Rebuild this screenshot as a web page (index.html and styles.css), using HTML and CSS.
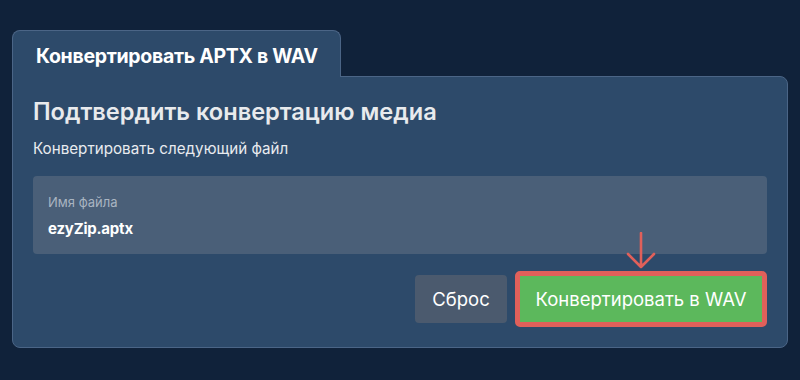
FILE: index.html
```html
<!DOCTYPE html>
<html lang="ru">
<head>
<meta charset="utf-8">
<link rel="stylesheet" href="styles.css">
</head>
<body>
<div class="wrap">
  <div class="tab">Конвертировать APTX в WAV</div>
  <div class="card">
    <h1 class="title">Подтвердить конвертацию медиа</h1>
    <p class="sub">Конвертировать следующий файл</p>
    <div class="field">
      <div class="label">Имя файла</div>
      <div class="value">ezyZip.aptx</div>
    </div>
    <div class="actions">
      <button class="btn reset">Сброс</button>
      <div class="convert-wrap">
        <svg class="arrow" width="32" height="38" viewBox="0 0 32 38"><path d="M16 1 V35 M3 22 L16 35 L29 22" fill="none" stroke="#e0605a" stroke-width="2.6" stroke-linecap="round" stroke-linejoin="round"/></svg>
        <button class="btn convert">Конвертировать в WAV</button>
      </div>
    </div>
  </div>
</div>
</body>
</html>
```
FILE: styles.css
```css
* { box-sizing: border-box; }
html, body { margin: 0; padding: 0; }
body {
  background: #10223a;
  font-family: Inter, "Noto Sans", sans-serif;
  width: 800px;
  height: 380px;
  overflow: hidden;
}
.wrap {
  padding: 30px 12px 0 12px;
  display: flex;
  flex-direction: column;
  align-items: flex-start;
}
.tab {
  width: 329px;
  height: 47px;
  background: #2d4a6a;
  border: 1px solid #4b6586;
  border-bottom: none;
  border-radius: 8px 8px 0 0;
  color: #ffffff;
  font-weight: 700;
  font-size: 19.5px;
  line-height: 24px;
  letter-spacing: -0.3px;
  padding: 13px 0 0 23px;
  position: relative;
  z-index: 1;
  margin-bottom: -1px;
}
.card {
  align-self: stretch;
  background: #2d4a6a;
  border: 1px solid #4b6586;
  border-radius: 0 8px 8px 8px;
  padding: 20px 20px 19px 20px;
  height: 272px;
}
.title {
  margin: 0;
  font-size: 23.6px;
  font-weight: 600;
  color: #e8eaed;
  line-height: 30px;
}
.sub {
  margin: 12px 0 0 0;
  font-size: 15.2px;
  color: #e8ebef;
  line-height: 20px;
}
.field {
  margin-top: 17px;
  background: #4a5f78;
  border-radius: 4px;
  height: 78px;
  padding: 17px 15px 0 15px;
}
.label {
  font-size: 13px;
  color: #a9b4c1;
  line-height: 18px;
}
.value {
  margin-top: 8px;
  font-size: 15px;
  font-weight: 700;
  color: #ffffff;
  line-height: 20px;
  letter-spacing: -0.2px;
}
.actions {
  margin-top: 17px;
  display: flex;
  justify-content: flex-end;
  align-items: center;
  gap: 8px;
}
.btn {
  font-family: Inter, "Noto Sans", sans-serif;
  color: #ffffff;
  border: none;
  cursor: pointer;
}
.reset {
  width: 92px;
  height: 48px;
  background: #4b5a6e;
  border-radius: 4px;
  font-size: 18.5px;
}
.convert-wrap {
  position: relative;
}
.convert {
  width: 252px;
  height: 56px;
  background: #5cb85c;
  border: 5px solid #e0605a;
  border-radius: 5px;
  font-size: 18.5px;
  display: block;
}
.arrow {
  position: absolute;
  left: 110px;
  top: -39px;
}
```
